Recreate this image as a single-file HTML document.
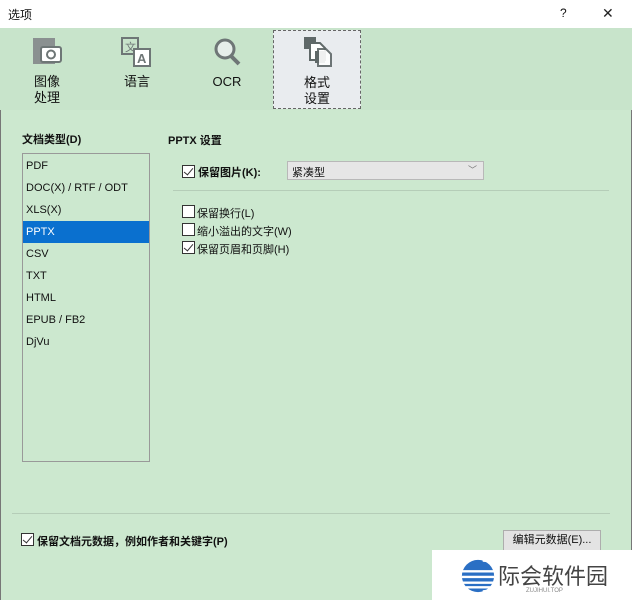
<!DOCTYPE html>
<html><head><meta charset="utf-8"><style>
body{margin:0;width:632px;height:600px;overflow:hidden;font-family:"Liberation Sans","Noto Sans CJK SC",sans-serif;font-size:11px;color:#111;position:relative;background:#cce8cf}
.a{position:absolute}
.title{left:0;top:0;width:632px;height:28px;background:#fff;border-bottom:1px solid #ddd}
.cb{position:absolute;width:11px;height:11px;border:1px solid #333;background:#fff}
.cb.on::after{content:"";position:absolute;left:3px;top:0px;width:4px;height:8px;border:solid #333;border-width:0 1.5px 1.5px 0;transform:rotate(40deg)}
.tab{position:absolute;top:30px;width:88px;height:79px;text-align:center;font-size:13px;line-height:16px}
.li{position:absolute;left:0;width:126px;height:22px;line-height:22px;padding-left:3px;box-sizing:border-box;font-size:11px}
</style></head><body>
<div class="a" style="left:0;top:0;width:1px;height:600px;background:#777"></div>
<div class="a" style="right:0;top:0;width:1px;height:600px;background:#777"></div>
<div class="a title"></div>
<div class="a" style="left:8px;top:6px;font-size:12px">选项</div>
<div class="a" style="left:560px;top:6px;font-size:12px">?</div>
<div class="a" style="left:602px;top:5px;font-size:14px;color:#222">✕</div>
<div class="a" style="left:0;top:28px;width:632px;height:82px;background:#c8e4cb"></div>
<div class="tab" style="left:3px"><svg width="32" height="32" style="margin-top:6px" viewBox="0 0 32 32"><rect x="2" y="2" width="22" height="26" fill="#8a9090"/><rect x="10" y="11" width="20" height="15" rx="2" fill="#fff" stroke="#6e7676" stroke-width="2"/><circle cx="20" cy="18.5" r="4" fill="none" stroke="#6e7676" stroke-width="2"/></svg><div style="margin-top:2px">图像<br>处理</div></div>
<div class="tab" style="left:93px"><svg width="34" height="32" style="margin-top:6px" viewBox="0 0 34 32"><rect x="2" y="2" width="16" height="16" fill="none" stroke="#6e7676" stroke-width="2"/><text x="5" y="15" font-size="11" fill="#6e7676">文</text><rect x="14" y="13" width="16" height="17" fill="#fff" stroke="#6e7676" stroke-width="2"/><text x="17" y="27" font-size="13" font-weight="bold" fill="#6e7676">A</text></svg><div style="margin-top:2px">语言</div></div>
<div class="tab" style="left:183px"><svg width="32" height="32" style="margin-top:6px" viewBox="0 0 32 32"><circle cx="14" cy="13" r="9" fill="#e6eeea" stroke="#6e7676" stroke-width="3"/><line x1="20" y1="20" x2="28" y2="28" stroke="#6e7676" stroke-width="4"/></svg><div style="margin-top:2px">OCR</div></div>
<div class="tab" style="left:273px;background:#e9ecef;border:1px dashed #666;box-sizing:border-box"><svg width="32" height="32" style="margin-top:4px" viewBox="0 0 32 32"><rect x="3" y="2" width="12" height="12" fill="#5f6868"/><path d="M9 8h10l5 5v12H9z" fill="#fff" stroke="#5f6868" stroke-width="2"/><rect x="14" y="16" width="10" height="12" fill="#5f6868"/><path d="M17 14h8l5 5v12H17z" fill="#fff" stroke="#5f6868" stroke-width="2" opacity=".9"/></svg><div style="margin-top:4px">格式<br>设置</div></div>
<div class="a" style="left:22px;top:131px;font-weight:bold;font-size:11px">文档类型(D)</div>
<div class="a" style="left:22px;top:153px;width:128px;height:309px;border:1px solid #999;box-sizing:border-box">
<div class="li" style="top:1px">PDF</div>
<div class="li" style="top:23px">DOC(X) / RTF / ODT</div>
<div class="li" style="top:45px">XLS(X)</div>
<div class="li" style="top:67px;background:#0a70cf;color:#fff">PPTX</div>
<div class="li" style="top:89px">CSV</div>
<div class="li" style="top:111px">TXT</div>
<div class="li" style="top:133px">HTML</div>
<div class="li" style="top:155px">EPUB / FB2</div>
<div class="li" style="top:177px">DjVu</div>
</div>
<div class="a" style="left:168px;top:132px;font-weight:bold">PPTX 设置</div>
<div class="cb on" style="left:182px;top:165px"></div>
<div class="a" style="left:198px;top:164px;font-weight:bold">保留图片(K):</div>
<div class="a" style="left:287px;top:161px;width:197px;height:19px;background:#e6e6e6;border:1px solid #b8b8b8;box-sizing:border-box"><span style="position:absolute;left:4px;top:2px">紧凑型</span><span style="position:absolute;right:6px;top:1px;color:#777;font-size:9px">﹀</span></div>
<div class="a" style="left:173px;top:190px;width:436px;height:1px;background:#b5cdb8"></div>
<div class="cb" style="left:182px;top:205px"></div><div class="a" style="left:197px;top:205px">保留换行(L)</div>
<div class="cb" style="left:182px;top:223px"></div><div class="a" style="left:197px;top:223px">缩小溢出的文字(W)</div>
<div class="cb on" style="left:182px;top:241px"></div><div class="a" style="left:197px;top:241px">保留页眉和页脚(H)</div>
<div class="a" style="left:12px;top:513px;width:598px;height:1px;background:#b5cdb8"></div>
<div class="cb on" style="left:21px;top:533px"></div>
<div class="a" style="left:37px;top:533px;font-weight:bold">保留文档元数据，例如作者和关键字(P)</div>
<div class="a" style="left:503px;top:530px;width:98px;height:21px;background:#e3e3e3;border:1px solid #adadad;box-sizing:border-box;text-align:center;line-height:19px">编辑元数据(E)...</div>
<div class="a" style="left:432px;top:550px;width:200px;height:50px;background:#fff"></div>
<svg class="a" style="left:460px;top:558px" width="36" height="36" viewBox="0 0 38 38"><circle cx="19" cy="19" r="17" fill="#2a6fc4"/><path d="M2 14h34M2 20h34M3 26h32M6 31h26" stroke="#fff" stroke-width="2.5"/><path d="M24 3a16 16 0 0 1 0 32" fill="none" stroke="#fff" stroke-width="2"/></svg>
<div class="a" style="left:498px;top:559px;font-size:22px;color:#444;letter-spacing:0px">际会软件园</div>
<div class="a" style="left:526px;top:588px;font-size:6px;color:#888">ZUJIHUI.TOP</div>
</body></html>
